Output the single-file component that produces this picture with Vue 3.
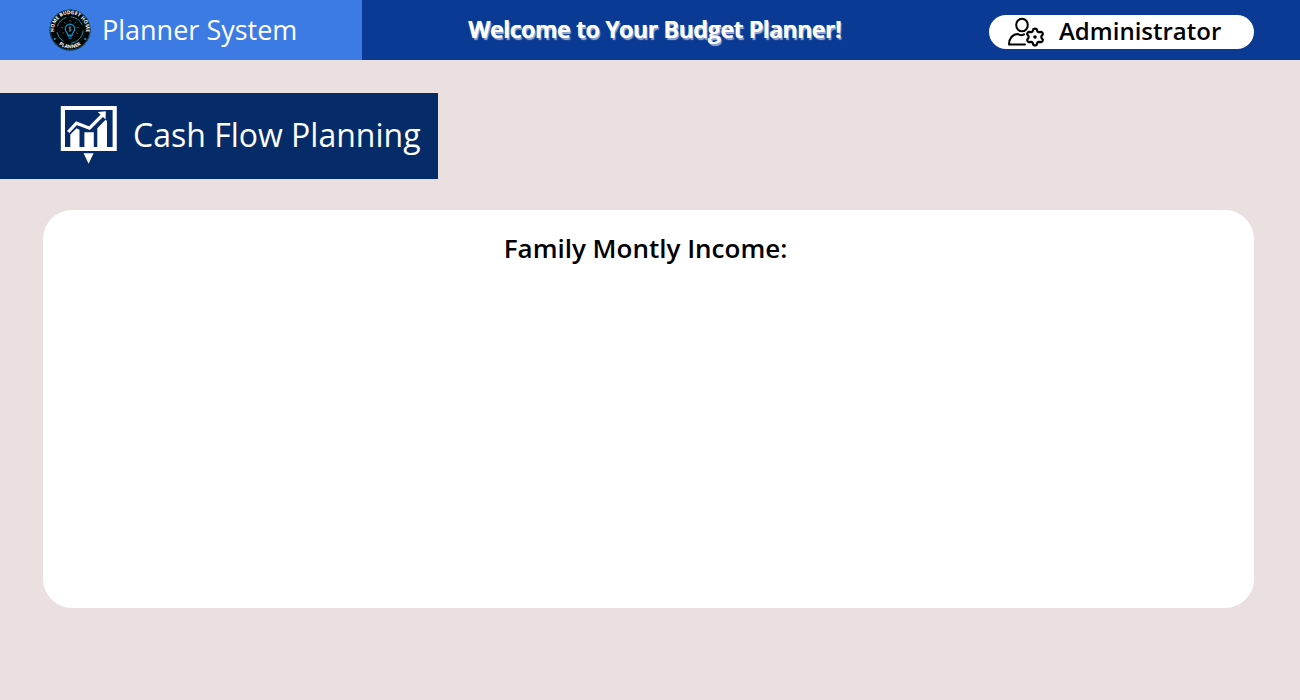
<script setup>
const rays = [-120, -80, -40, 0, 40, 80, 120]
</script>

<template>
  <div class="page">
    <header class="topbar">
      <div class="brand">
        <svg class="logo" viewBox="0 0 42 42" role="img" aria-label="Home Budget Home Planner">
          <defs>
            <path id="arc-top" d="M6.4 27.6A16 16 0 1 1 35.6 27.6" />
            <path id="arc-bottom" d="M6 31.5A18.3 18.3 0 0 0 36 31.5" />
          </defs>
          <circle cx="21" cy="21" r="20.5" fill="#020506" />
          <circle cx="21" cy="21" r="19.9" fill="none" stroke="#12607a" stroke-width=".8" />
          <text class="logo-text"><textPath href="#arc-top" startOffset="50%" text-anchor="middle">HOME BUDGET HOME</textPath></text>
          <text class="logo-text"><textPath href="#arc-bottom" startOffset="50%" text-anchor="middle">PLANNER</textPath></text>
          <g fill="none" stroke="#1b8d9e" stroke-width="1" stroke-linecap="round">
            <path d="M8.4 17.2A13.2 13.2 0 0 1 17 8.5M22 7.9A13.2 13.2 0 0 1 33 15.4M34.1 22A13.2 13.2 0 0 1 22.5 34.1M8 23.5A13.2 13.2 0 0 0 14 32" />
          </g>
          <circle cx="5.8" cy="30" r="1" fill="#1aa9bd" />
          <circle cx="36.2" cy="30" r="1" fill="#1aa9bd" />
          <path d="M18.9 26.2C18.9 23.8 16.3 22.8 16.3 19.9A4.7 4.7 0 0 1 25.7 19.9C25.7 22.8 23.1 23.8 23.1 26.2Z" fill="none" stroke="#1683b4" stroke-width="1.4" />
          <path d="M19 27.7h4M19.6 29.2h2.8" stroke="#1683b4" stroke-width="1.1" />
          <path d="M22.3 18.6c-.5-.8-2.5-.7-2.5.4 0 1.2 2.6.7 2.6 2 0 1.1-2.1 1.2-2.7.3M21 17.4v5.4" fill="none" stroke="#8aa9b5" stroke-width=".6" />
          <path v-for="r in rays" :key="r" d="M21 12.8v-1.7" :transform="`rotate(${r} 21 20)`" stroke="#6d7f86" stroke-width=".7" />
        </svg>
        <span class="brand-name">Planner System</span>
      </div>
      <p class="welcome">Welcome to Your Budget Planner!</p>
      <div class="account">
        <button type="button" class="user">
          <svg class="user-icon" viewBox="0 0 38 30" fill="none" stroke="#000" stroke-width="2" stroke-linejoin="round" stroke-linecap="round" aria-hidden="true">
            <ellipse cx="15" cy="8" rx="5.8" ry="6.3" />
            <path d="M18 27.4H2C2 21.5 5.5 17 11 17c1.4 1.2 4 1.5 6 .3" />
            <path stroke-width="2.2" d="M26.4 12.2Q28 11 29.6 12.2L30.4 14.4L32 15.2L34.2 14.8Q36 15.4 35.8 17.4L34.4 19.2V20.8L35.8 22.6Q36 24.6 34.2 25.2L32 24.8L30.4 25.6L29.6 27.8Q28 29 26.4 27.8L25.6 25.6L24 24.8L21.8 25.2Q20 24.6 20.2 22.6L21.6 20.8V19.2L20.2 17.4Q20 15.4 21.8 14.8L24 15.2L25.6 14.4Z" />
            <circle cx="28" cy="20" r="1.8" fill="#000" stroke="none" />
          </svg>
          <span class="user-name">Administrator</span>
        </button>
      </div>
    </header>

    <main>
      <div class="section-title">
        <svg class="chart-icon" viewBox="0 0 58 60" fill="#fff" aria-hidden="true">
          <path fill-rule="evenodd" d="M.8 1H56.8V46H.8zM5 5V42H52.6V5z" />
          <path d="M10.3 29.5l6.2-6.2 3 1.5V42h-9.2zM24.4 27.3h9.4V42h-9.4zM37.3 23.2l8-8.2 1.7.8V42h-9.7z" />
          <path d="M8.2 27l8.3-8.8 13 5L42.6 10" fill="none" stroke="#052b69" stroke-width="6" />
          <path d="M8.2 27l8.3-8.8 13 5L42.6 10" fill="none" stroke="#fff" stroke-width="3.2" />
          <path d="M37.8 7l8-.8-.2 8.4zM23.6 48.2H33.6L28.6 58.8z" />
        </svg>
        <h1>Cash Flow Planning</h1>
      </div>
      <section class="card">
        <h2>Family Montly Income:</h2>
      </section>
    </main>
  </div>
</template>

<style>
body {
  margin: 0;
  background: #ebe0e0;
}
</style>

<style scoped>
.page {
  min-height: 100vh;
  box-sizing: border-box;
  background: #ebe0e0;
  font-family: "Open Sans", "Noto Sans", sans-serif;
}
.topbar {
  display: flex;
  height: 60px;
  background: #0a3a93;
}
.brand {
  display: flex;
  align-items: center;
  gap: 11px;
  width: 362px;
  padding-left: 49px;
  box-sizing: border-box;
  flex: none;
  background: #3c7ae4;
  color: #fff;
}
.logo {
  width: 42px;
  height: 42px;
}
.logo-text {
  font-size: 5px;
  font-weight: 700;
  fill: #fff;
}
.brand-name {
  font-size: 27px;
  line-height: 40px;
  font-weight: 400;
}
.welcome {
  flex: 1;
  margin: 0;
  padding-left: 106px;
  color: #fff;
  font-size: 23px;
  line-height: 58px;
  font-weight: 600;
  white-space: nowrap;
  text-shadow: 1px 0 0 #fff, 2px 2px 1px #9fafd3;
}
.account {
  display: flex;
  align-items: center;
  padding: 4px 46px 0 0;
}
.user {
  display: flex;
  align-items: center;
  gap: 14px;
  width: 265px;
  height: 34px;
  padding: 0 0 0 18px;
  border: 0;
  border-radius: 17px;
  background: #fff;
  color: #000;
  font-family: inherit;
  font-size: 24px;
  line-height: 32px;
  font-weight: 600;
  cursor: pointer;
}
.user-name {
  padding-bottom: 2px;
}
.user-icon {
  width: 38px;
  height: 30px;
  flex: none;
}
.section-title {
  display: flex;
  align-items: center;
  gap: 15px;
  width: 438px;
  height: 86px;
  margin-top: 33px;
  padding: 0 0 2px 60px;
  box-sizing: border-box;
  background: #052b69;
  color: #fff;
}
.chart-icon {
  width: 58px;
  height: 60px;
  flex: none;
}
h1 {
  margin: 0;
  font-size: 32px;
  line-height: 44px;
  font-weight: 400;
  white-space: nowrap;
}
.card {
  min-height: 398px;
  margin: 31px 46px 0 43px;
  padding-top: 20px;
  box-sizing: border-box;
  border-radius: 29px;
  background: #fff;
  text-align: center;
}
h2 {
  margin: 0;
  padding-right: 6px;
  font-size: 26px;
  line-height: 36px;
  font-weight: 600;
  color: #000;
}
</style>
